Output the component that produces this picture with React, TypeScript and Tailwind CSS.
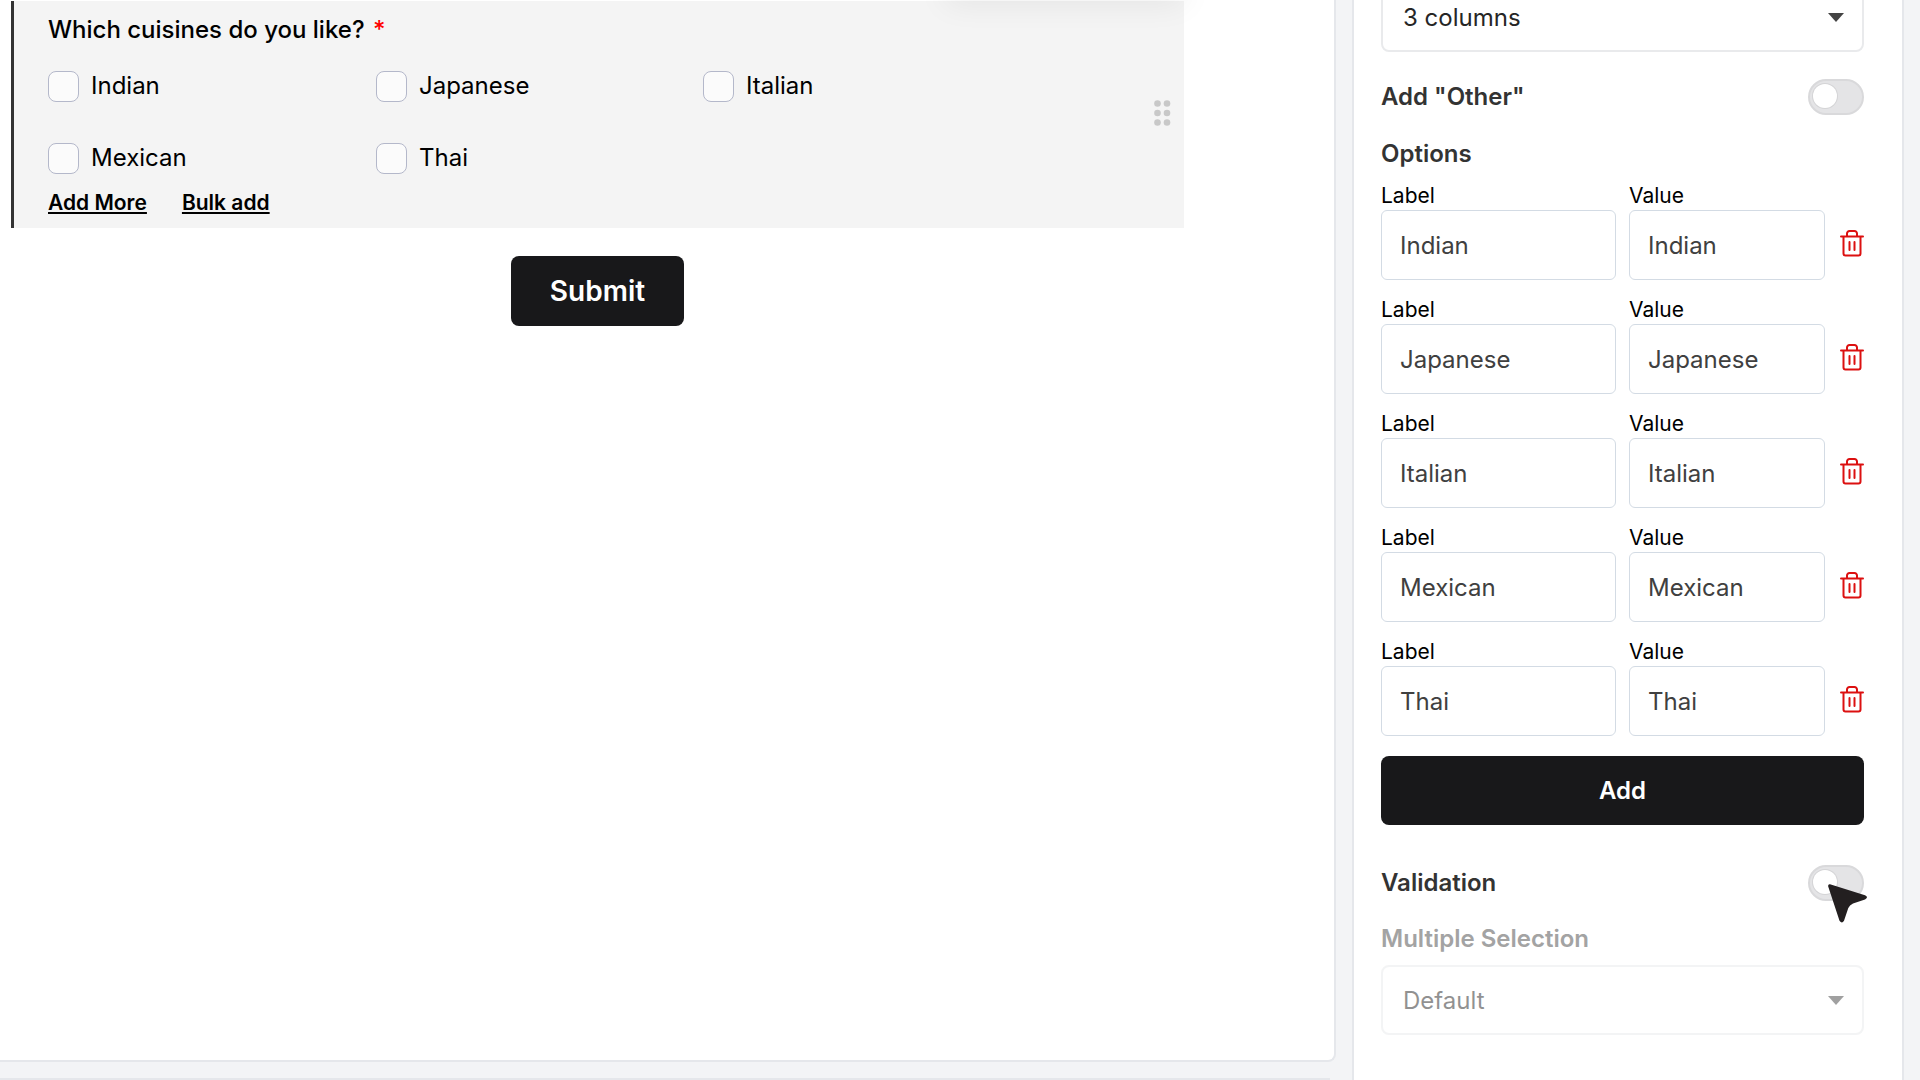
import { useState } from "react";

const cuisines = ["Indian", "Japanese", "Italian", "Mexican", "Thai"];

const inputClass =
  "h-[70px] w-full rounded-md border border-[#d3dbe4] bg-white px-[18px] text-2xl text-[#404040] outline-none";

function TrashIcon() {
  return (
    <svg className="h-[27px] w-6" viewBox="0 0 24 27" fill="none" stroke="#dc1010" strokeWidth={2} strokeLinecap="round" strokeLinejoin="round">
      <path d="M1 6.500h22" />
      <path d="M7 6V3.500A2.500 2.500 0 0 1 9.500 1h5A2.500 2.500 0 0 1 17 3.500V6" />
      <path d="M3.500 7v16.500a2 2 0 0 0 2 2h13a2 2 0 0 0 2-2V7" />
      <path d="M9.500 12v8M14.500 12v8" />
    </svg>
  );
}

function DragHandle() {
  return (
    <svg className="h-[26px] w-[17px]" viewBox="0 0 17 26" fill="#c8c8c8">
      {[3.5, 13, 22.5].map((y) => (
        <g key={y}>
          <circle cx="3.500" cy={y} r="3.300" />
          <circle cx="13" cy={y} r="3.300" />
        </g>
      ))}
    </svg>
  );
}

function Cursor() {
  return (
    <svg className="pointer-events-none absolute left-5 top-[18px] h-10 w-10" viewBox="0 0 40 40" fill="#231f20">
      <path d="M2 1.200 37 12.300Q41 14 37 16.500L25 20.500Q21.500 22 20.300 25L16 37.800Q14 41 11.500 37.800L.2 3.500Q-.2.800 2 1.200Z" />
    </svg>
  );
}

function Switch({ id }: { id: string }) {
  return (
    <input
      id={id}
      type="checkbox"
      role="switch"
      className="block h-9 w-14 appearance-none rounded-full border-2 border-[#d9d9db] bg-[#e4e4e6] pl-[3px] pt-[3px] before:block before:size-6 before:rounded-full before:bg-white before:ring-1 before:ring-[#d4d4d6] checked:before:translate-x-5"
    />
  );
}

function Select({ id, label, options, disabled }: { id: string; label: string; options: string[]; disabled?: boolean }) {
  return (
    <div className={disabled ? "relative opacity-50" : "relative"}>
      <select
        id={id}
        aria-label={label}
        disabled={disabled}
        className="h-[70px] w-full appearance-none rounded-lg border-2 border-[#e9eaec] bg-white px-5 pt-0.5 text-2xl text-[#262626] opacity-100"
      >
        {options.map((o) => (
          <option key={o}>{o}</option>
        ))}
      </select>
      <svg className="pointer-events-none absolute right-5 top-[31px] h-[9px] w-4" viewBox="0 0 16 9" fill="#444">
        <path d="M0 0h16L8 9z" />
      </svg>
    </div>
  );
}

export default function App() {
  const [options, setOptions] = useState(cuisines);

  return (
    <div className="flex h-screen overflow-hidden bg-gray-100 font-['Inter',sans-serif] text-black">
      <main className="flex min-w-0 flex-1 flex-col">
        <section className="relative flex-1 rounded-br-lg border-b-2 border-r-2 border-gray-200 bg-white pl-[11px] pr-[150px] pt-px">
          <div className="flex items-center justify-between border-l-[3px] border-[#333] bg-[#f4f4f4] pl-[34px] pr-[13px]">
            <fieldset className="min-w-0 flex-1">
              <legend className="pt-[13px] text-2xl leading-8 font-medium">
                Which cuisines do you like? <span className="ml-0.5 text-[#f00]">*</span>
              </legend>
              <div className="mt-6 grid grid-cols-[328px_327px_1fr] gap-y-10">
                {cuisines.map((c) => (
                  <label key={c} className="flex items-center gap-3 text-2xl leading-8">
                    <input type="checkbox" className="size-[31px] appearance-none rounded-lg border border-[#b4b8ca] bg-[#fbfbfb] checked:bg-gray-800" />
                    {c}
                  </label>
                ))}
              </div>
              <div className="mt-[15px] flex gap-[35px] pb-[11px] text-[21px] leading-7 font-semibold">
                <button className="underline underline-offset-2">Add More</button>
                <button className="underline underline-offset-2">Bulk add</button>
              </div>
            </fieldset>
            <button aria-label="Drag question" className="pb-1">
              <DragHandle />
            </button>
          </div>
          <div className="mt-7 flex justify-center">
            <button className="h-[70px] rounded-lg bg-[#18181a] px-[39px] text-[28px] leading-8 font-semibold text-white">Submit</button>
          </div>
          {/* shadow of the toolbar sitting above the question */}
          <div className="absolute -top-4 right-[150px] h-4 w-[238px] shadow-[0_0_32px_rgba(0,0,0,0.11)]" />
        </section>
        <div className="mt-4 mr-1.5 h-0.5 bg-gray-200" />
      </main>

      <aside className="ml-4 mr-4 w-[552px] shrink-0 border-x-2 border-gray-200 bg-white pl-[27px] pr-[38px]">
        <div className="-mt-[18px]">
          <Select id="columns" label="Columns" options={["3 columns", "2 columns", "1 column"]} />
        </div>

        <div className="mt-[27px] flex items-center justify-between">
          <label htmlFor="other" className="text-2xl leading-8 font-semibold text-[#333]">
            Add "Other"
          </label>
          <Switch id="other" />
        </div>

        <h2 className="mt-[23px] text-2xl leading-8 font-semibold text-[#333]">Options</h2>
        <div className="mt-3 flex flex-col gap-4">
          {options.map((o, i) => (
            <div key={o} className="flex items-center">
              <div className="w-[235px]">
                <label htmlFor={`label-${i}`} className="block text-[21px] leading-7">
                  Label
                </label>
                <input id={`label-${i}`} defaultValue={o} className={inputClass} />
              </div>
              <div className="ml-[13px] w-[196px]">
                <label htmlFor={`value-${i}`} className="block text-[21px] leading-7">
                  Value
                </label>
                <input id={`value-${i}`} defaultValue={o} className={inputClass} />
              </div>
              <button aria-label={`Delete ${o}`} className="ml-auto mt-6" onClick={() => setOptions(options.filter((x) => x !== o))}>
                <TrashIcon />
              </button>
            </div>
          ))}
        </div>

        <button className="mt-5 h-[69px] w-full rounded-lg bg-[#18181a] text-2xl font-semibold text-white">Add</button>

        <div className="mt-10 flex items-center justify-between">
          <label htmlFor="validation" className="text-2xl leading-8 font-semibold text-[#333]">
            Validation
          </label>
          <div className="relative">
            <Switch id="validation" />
            <Cursor />
          </div>
        </div>

        <label htmlFor="selection" className="mt-[22px] mb-2.5 block text-2xl leading-8 font-semibold text-[#a3a3a3]">
          Multiple Selection
        </label>
        <Select id="selection" label="Multiple Selection" options={["Default"]} disabled />
      </aside>
    </div>
  );
}
